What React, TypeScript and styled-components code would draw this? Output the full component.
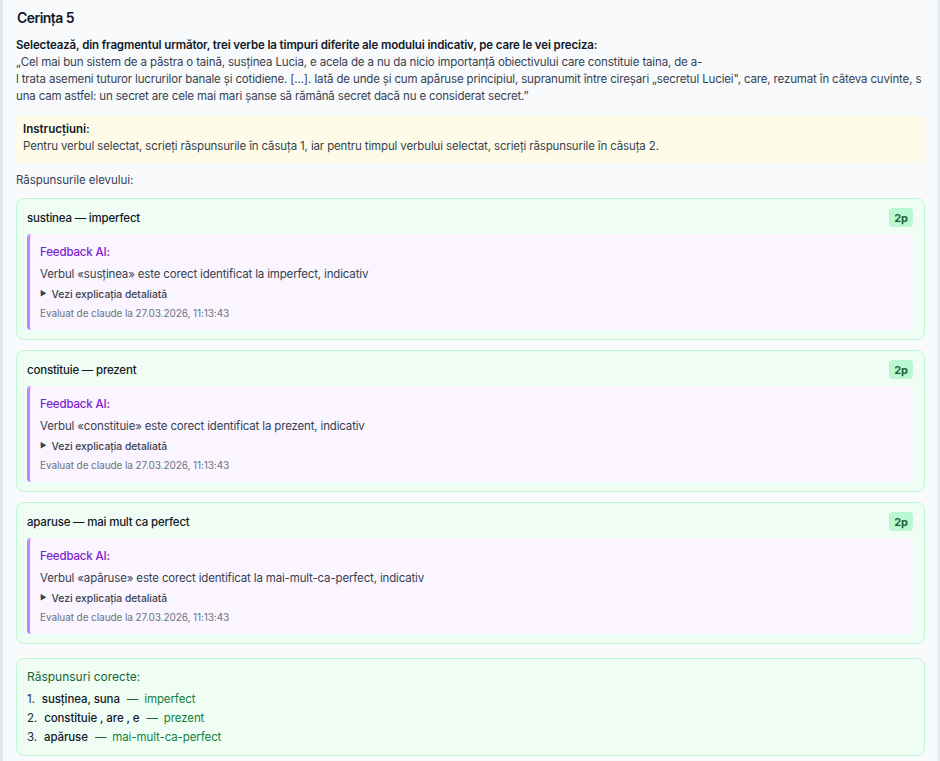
import React from "react";
import styled, { createGlobalStyle } from "styled-components";

const GlobalStyle = createGlobalStyle`
  html, body {
    margin: 0;
    padding: 0;
    background: #f8fafc;
  }
  body {
    font-family: Inter, "Noto Sans", "Liberation Sans", sans-serif;
    color: #111827;
  }
  * { box-sizing: border-box; }
`;

const Panel = styled.div`
  min-height: 761px;
  background: #f8fafc;
  border-left: 3px solid #e2e8f0;
  border-right: 3px solid #e8edf3;
  padding: 9px 12px 6px 13px;
`;

const Title = styled.h2`
  margin: 0;
  font-size: 14px;
  line-height: 18px;
  font-weight: 600;
  letter-spacing: -0.55px;
  color: #111827;
  padding-left: 1px;
`;

const Prompt = styled.p`
  margin: 9.5px 0 0;
  font-size: 11.5px;
  line-height: 17px;
  font-weight: 600;
  letter-spacing: -0.13px;
  color: #111827;
`;

const Quote = styled.p`
  margin: 0;
  font-size: 11.5px;
  line-height: 17px;
  letter-spacing: -0.15px;
  color: #374151;
  white-space: pre-line;
`;

const Instructions = styled.div`
  margin-top: 11.5px;
  background: #fefce8;
  border-radius: 4px;
  padding: 5px 8px 8px 7px;
  font-size: 11.5px;
  line-height: 17px;
  letter-spacing: -0.14px;
  color: #374151;
`;

const InstructionsHead = styled.div`
  font-weight: 600;
  letter-spacing: 0;
  color: #111827;
`;

const SectionLabel = styled.div`
  margin-top: 8.5px;
  font-size: 11.5px;
  line-height: 17px;
  letter-spacing: -0.05px;
  color: #374151;
`;

const AnswerList = styled.div`
  margin-top: 9.5px;
  display: flex;
  flex-direction: column;
  gap: 10px;
`;

const AnswerCard = styled.div`
  background: #f0fdf4;
  border: 1px solid #bbf7d0;
  border-radius: 8px;
  padding: 9px 11px 9px 10px;
`;

const AnswerHeader = styled.div`
  display: flex;
  align-items: center;
  justify-content: space-between;
  height: 19px;
`;

const AnswerText = styled.span`
  font-size: 11.5px;
  font-weight: 500;
  letter-spacing: -0.2px;
  color: #111827;
`;

const Badge = styled.span`
  display: inline-flex;
  align-items: center;
  justify-content: center;
  height: 19px;
  padding: 0 5px;
  border-radius: 4px;
  background: #bbf7d0;
  color: #166534;
  font-size: 11px;
  font-weight: 700;
`;

const Feedback = styled.div`
  margin-top: 7px;
  background: #faf5ff;
  border-left: 3px solid #c084fc;
  border-radius: 4px;
  padding: 10px 12px 10px 10px;
`;

const FeedbackTitle = styled.div`
  font-size: 11.5px;
  line-height: 16px;
  letter-spacing: -0.15px;
  color: #7e22ce;
  font-weight: 500;
`;

const FeedbackText = styled.div`
  margin-top: 5.5px;
  font-size: 11.5px;
  line-height: 16px;
  letter-spacing: -0.16px;
  color: #374151;
`;

const Details = styled.div`
  margin-top: 5.5px;
  font-size: 10.3px;
  line-height: 14px;
  color: #374151;
  font-weight: 500;
  display: flex;
  align-items: center;
  gap: 5px;
`;

const Arrow = styled.span`
  font-size: 7px;
  color: #374151;
`;

const Evaluated = styled.div`
  margin-top: 5px;
  font-size: 10px;
  line-height: 14px;
  letter-spacing: -0.08px;
  color: #6b7280;
`;

const CorrectCard = styled.div`
  margin-top: 14px;
  background: #f0fdf4;
  border: 1px solid #bbf7d0;
  border-radius: 8px;
  padding: 10px 10px 8px;
`;

const CorrectTitle = styled.div`
  font-size: 12px;
  line-height: 16px;
  color: #166534;
  margin-bottom: 4.5px;
`;

const CorrectRow = styled.div`
  font-size: 11.5px;
  line-height: 19px;
  letter-spacing: -0.1px;
  color: #111827;
  display: flex;
  gap: 7px;
`;

const RowNum = styled.span`
  color: #1f2937;
`;

const Words = styled.span`
  font-weight: 500;
  color: #111827;
`;

const Dash = styled.span`
  color: #166534;
  margin-right: -1px;
`;

const Tense = styled.span`
  color: #15803d;
`;

type Answer = { head: string; verb: string; tense: string };

const answers: Answer[] = [
  { head: "sustinea — imperfect", verb: "susținea", tense: "imperfect" },
  { head: "constituie — prezent", verb: "constituie", tense: "prezent" },
  { head: "aparuse — mai mult ca perfect", verb: "apăruse", tense: "mai-mult-ca-perfect" },
];

const correct = [
  { words: "susținea, suna", tense: "imperfect" },
  { words: "constituie , are , e", tense: "prezent" },
  { words: "apăruse", tense: "mai-mult-ca-perfect" },
];

const quote =
  "„Cel mai bun sistem de a păstra o taină, susținea Lucia, e acela de a nu da nicio importanță obiectivului care constituie taina, de a-\n" +
  "l trata asemeni tuturor lucrurilor banale și cotidiene. [...]. Iată de unde și cum apăruse principiul, supranumit între cireșari „secretul Luciei\", care, rezumat în câteva cuvinte, s\n" +
  "una cam astfel: un secret are cele mai mari șanse să rămână secret dacă nu e considerat secret.”";

export default function App() {
  return (
    <>
      <GlobalStyle />
      <Panel>
        <Title>Cerința 5</Title>
        <Prompt>
          Selectează, din fragmentul următor, trei verbe la timpuri diferite ale modului indicativ, pe care le vei preciza:
        </Prompt>
        <Quote>{quote}</Quote>
        <Instructions>
          <InstructionsHead>Instrucțiuni:</InstructionsHead>
          Pentru verbul selectat, scrieți răspunsurile în căsuța 1, iar pentru timpul verbului selectat, scrieți răspunsurile în căsuța 2.
        </Instructions>
        <SectionLabel>Răspunsurile elevului:</SectionLabel>
        <AnswerList>
          {answers.map((a) => (
            <AnswerCard key={a.head}>
              <AnswerHeader>
                <AnswerText>{a.head}</AnswerText>
                <Badge>2p</Badge>
              </AnswerHeader>
              <Feedback>
                <FeedbackTitle>Feedback AI:</FeedbackTitle>
                <FeedbackText>
                  Verbul «{a.verb}» este corect identificat la {a.tense}, indicativ
                </FeedbackText>
                <Details>
                  <Arrow>▶</Arrow>
                  Vezi explicația detaliată
                </Details>
                <Evaluated>Evaluat de claude la 27.03.2026, 11:13:43</Evaluated>
              </Feedback>
            </AnswerCard>
          ))}
        </AnswerList>
        <CorrectCard>
          <CorrectTitle>Răspunsuri corecte:</CorrectTitle>
          {correct.map((c, i) => (
            <CorrectRow key={c.words}>
              <RowNum>{i + 1}.</RowNum>
              <Words>{c.words}</Words>
              <Dash>—</Dash>
              <Tense>{c.tense}</Tense>
            </CorrectRow>
          ))}
        </CorrectCard>
      </Panel>
    </>
  );
}
